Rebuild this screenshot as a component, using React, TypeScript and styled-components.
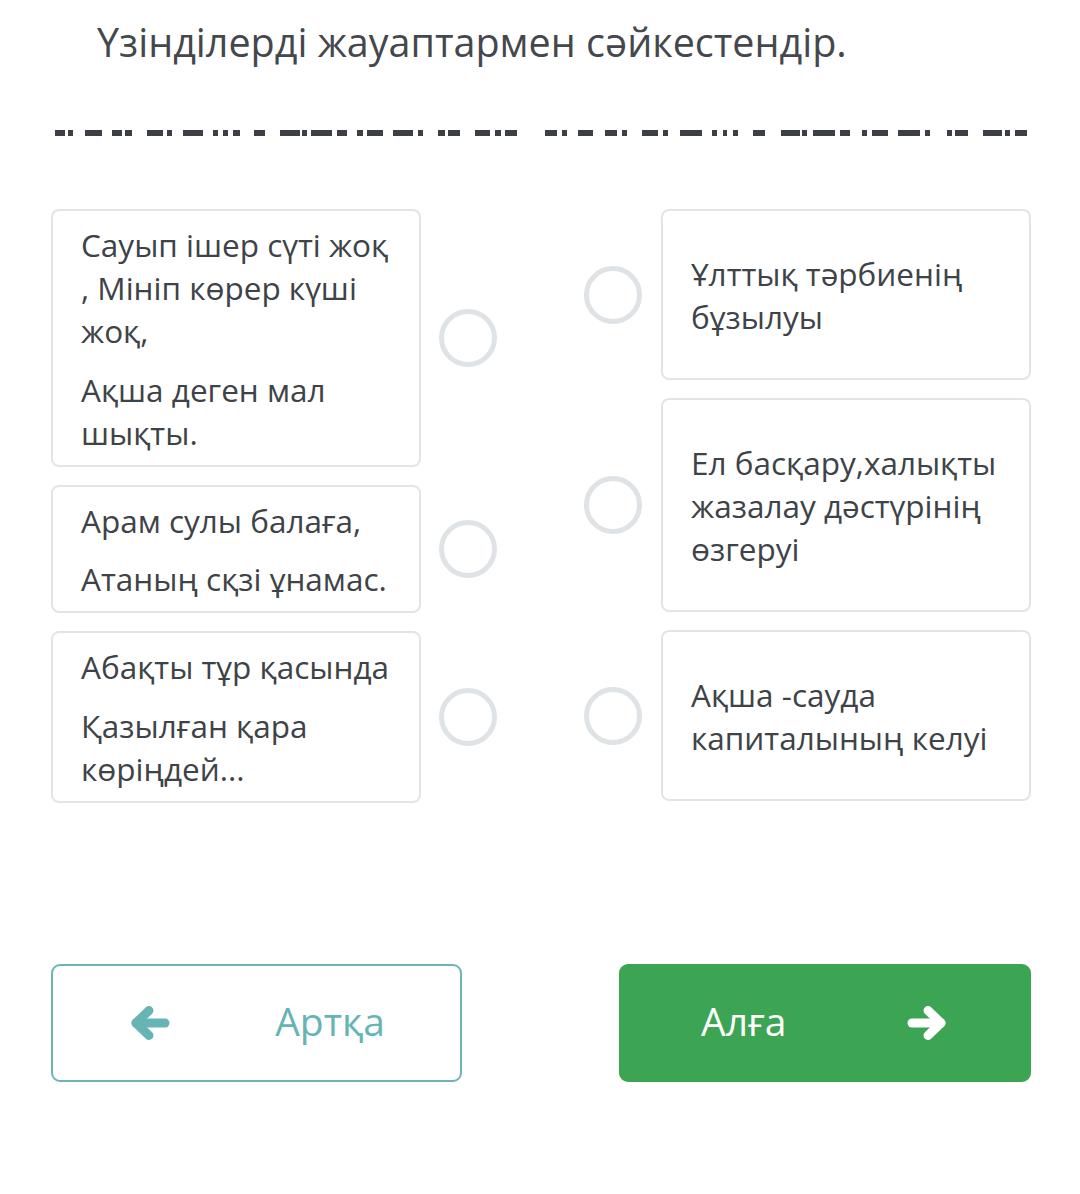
import React from "react";
import styled, { createGlobalStyle } from "styled-components";

const Global = createGlobalStyle`
  html, body { margin: 0; padding: 0; background: #ffffff; }
  body { font-family: "Open Sans", "Noto Sans", sans-serif; color: #3e4348; }
`;

const Page = styled.div`
  width: 1080px;
  box-sizing: border-box;
  padding: 0 49px 0 51px;
`;

const Title = styled.h1`
  margin: 0;
  padding: 16px 0 0 46px;
  font-size: 39.5px;
  font-weight: 400;
  line-height: 52px;
  color: #44484d;
`;

const Redacted = styled.div`
  display: flex;
  align-items: center;
  height: 6px;
  margin-top: 62px;
`;

const Bar = styled.span<{ $w: number; $ml: number }>`
  display: block;
  flex: none;
  height: 6px;
  width: ${(p) => p.$w}px;
  margin-left: ${(p) => p.$ml}px;
  background: #3c4046;
`;

const Match = styled.div`
  display: flex;
  justify-content: space-between;
  margin-top: 73px;
`;

const Column = styled.div`
  display: flex;
  flex-direction: column;
  gap: 18px;
`;

const Row = styled.div<{ $gap: number }>`
  display: flex;
  align-items: center;
  gap: ${(p) => p.$gap}px;
`;

const Card = styled.div<{ $right?: boolean }>`
  width: 370px;
  box-sizing: border-box;
  border: 2px solid #e2e5e8;
  border-radius: 8px;
  background: #fff;
  padding: ${(p) => (p.$right ? "41px 12px 40px 28px" : "12px 12px 11px 28px")};
  font-size: 31.5px;
  line-height: 43px;
  color: #3e4348;
`;

const Para = styled.p`
  margin: 0;
  & + & { margin-top: 15.5px; }
`;

const Circle = styled.div`
  width: 58px;
  height: 58px;
  box-sizing: border-box;
  border: 5px solid #dfe3e6;
  border-radius: 50%;
  flex: none;
`;

const Buttons = styled.div`
  display: flex;
  justify-content: space-between;
  margin-top: 161px;
`;

const NavButton = styled.button<{ $primary?: boolean }>`
  display: flex;
  align-items: center;
  justify-content: space-between;
  box-sizing: border-box;
  height: 118px;
  width: ${(p) => (p.$primary ? "412px" : "411px")};
  padding: ${(p) => (p.$primary ? "0 82px 0 80px" : "0 75px 0 77px")};
  border-radius: 9px;
  border: 2px solid ${(p) => (p.$primary ? "#3ba553" : "#6cb4b6")};
  background: ${(p) => (p.$primary ? "#3ba553" : "#ffffff")};
  color: ${(p) => (p.$primary ? "#ffffff" : "#66b4b4")};
  font-family: "Open Sans", "Noto Sans", sans-serif;
  font-size: 39px;
  font-weight: 400;
  cursor: pointer;
  svg { flex: none; }
`;

const Label = styled.span`
  display: block;
  margin-top: -4px;
`;

function Arrow({ dir }: { dir: "left" | "right" }) {
  return (
    <svg
      width="40"
      height="36"
      viewBox="0 0 40 36"
      fill="none"
      stroke="currentColor"
      strokeWidth="9"
      strokeLinecap="round"
      strokeLinejoin="round"
      style={dir === "right" ? { transform: "scaleX(-1)" } : undefined}
    >
      <path d="M6 18 H35" />
      <path d="M19 5.5 L6 18 L19 30.5" />
    </svg>
  );
}

const seg1: [number, number][] = [
  [55, 65], [68, 73], [85, 102], [112, 122], [125, 132], [147, 163], [167, 172],
  [183, 203], [213, 218], [223, 228], [233, 240], [254, 265], [280, 300], [302, 307],
  [311, 332], [337, 347], [357, 363], [367, 383], [393, 413], [418, 423], [438, 445],
  [448, 460], [475, 490], [495, 501], [505, 517],
];
const seg2: [number, number][] = [
  [545, 557], [562, 567], [578, 593], [605, 617], [622, 627], [642, 658], [663, 668],
  [680, 702], [712, 717], [723, 727], [733, 738], [753, 765], [781, 800], [802, 807],
  [813, 835], [840, 850], [862, 867], [872, 888], [898, 920], [925, 930], [947, 952],
  [955, 968], [983, 1002], [1005, 1010], [1015, 1027],
];
const bars = [...seg1, ...seg2];

const left: string[][] = [
  ["Сауып ішер сүті жоқ ,\u00a0Мініп көрер күші жоқ,", "Ақша деген мал шықты."],
  ["Арам сулы балаға,", "Атаның сқзі ұнамас."],
  ["Абақты тұр қасында", "Қазылған қара көріңдей..."],
];

const right: string[] = [
  "Ұлттық тәрбиенің бұзылуы",
  "Ел басқару,халықты жазалау дәстүрінің өзгеруі",
  "Ақша -сауда капиталының келуі",
];

export default function App() {
  let prev = 51;
  return (
    <Page>
      <Global />
      <Title>Үзінділерді жауаптармен сәйкестендір.</Title>
      <Redacted>
        {bars.map(([s, e], i) => {
          const ml = s - prev;
          prev = e;
          return <Bar key={i} $w={e - s} $ml={ml} />;
        })}
      </Redacted>
      <Match>
        <Column>
          {left.map((paras, i) => (
            <Row key={i} $gap={18}>
              <Card>
                {paras.map((t, j) => (
                  <Para key={j}>{t}</Para>
                ))}
              </Card>
              <Circle />
            </Row>
          ))}
        </Column>
        <Column>
          {right.map((t, i) => (
            <Row key={i} $gap={19}>
              <Circle />
              <Card $right>
                <Para>{t}</Para>
              </Card>
            </Row>
          ))}
        </Column>
      </Match>
      <Buttons>
        <NavButton>
          <Arrow dir="left" />
          <Label>Артқа</Label>
        </NavButton>
        <NavButton $primary>
          <Label>Алға</Label>
          <Arrow dir="right" />
        </NavButton>
      </Buttons>
    </Page>
  );
}
